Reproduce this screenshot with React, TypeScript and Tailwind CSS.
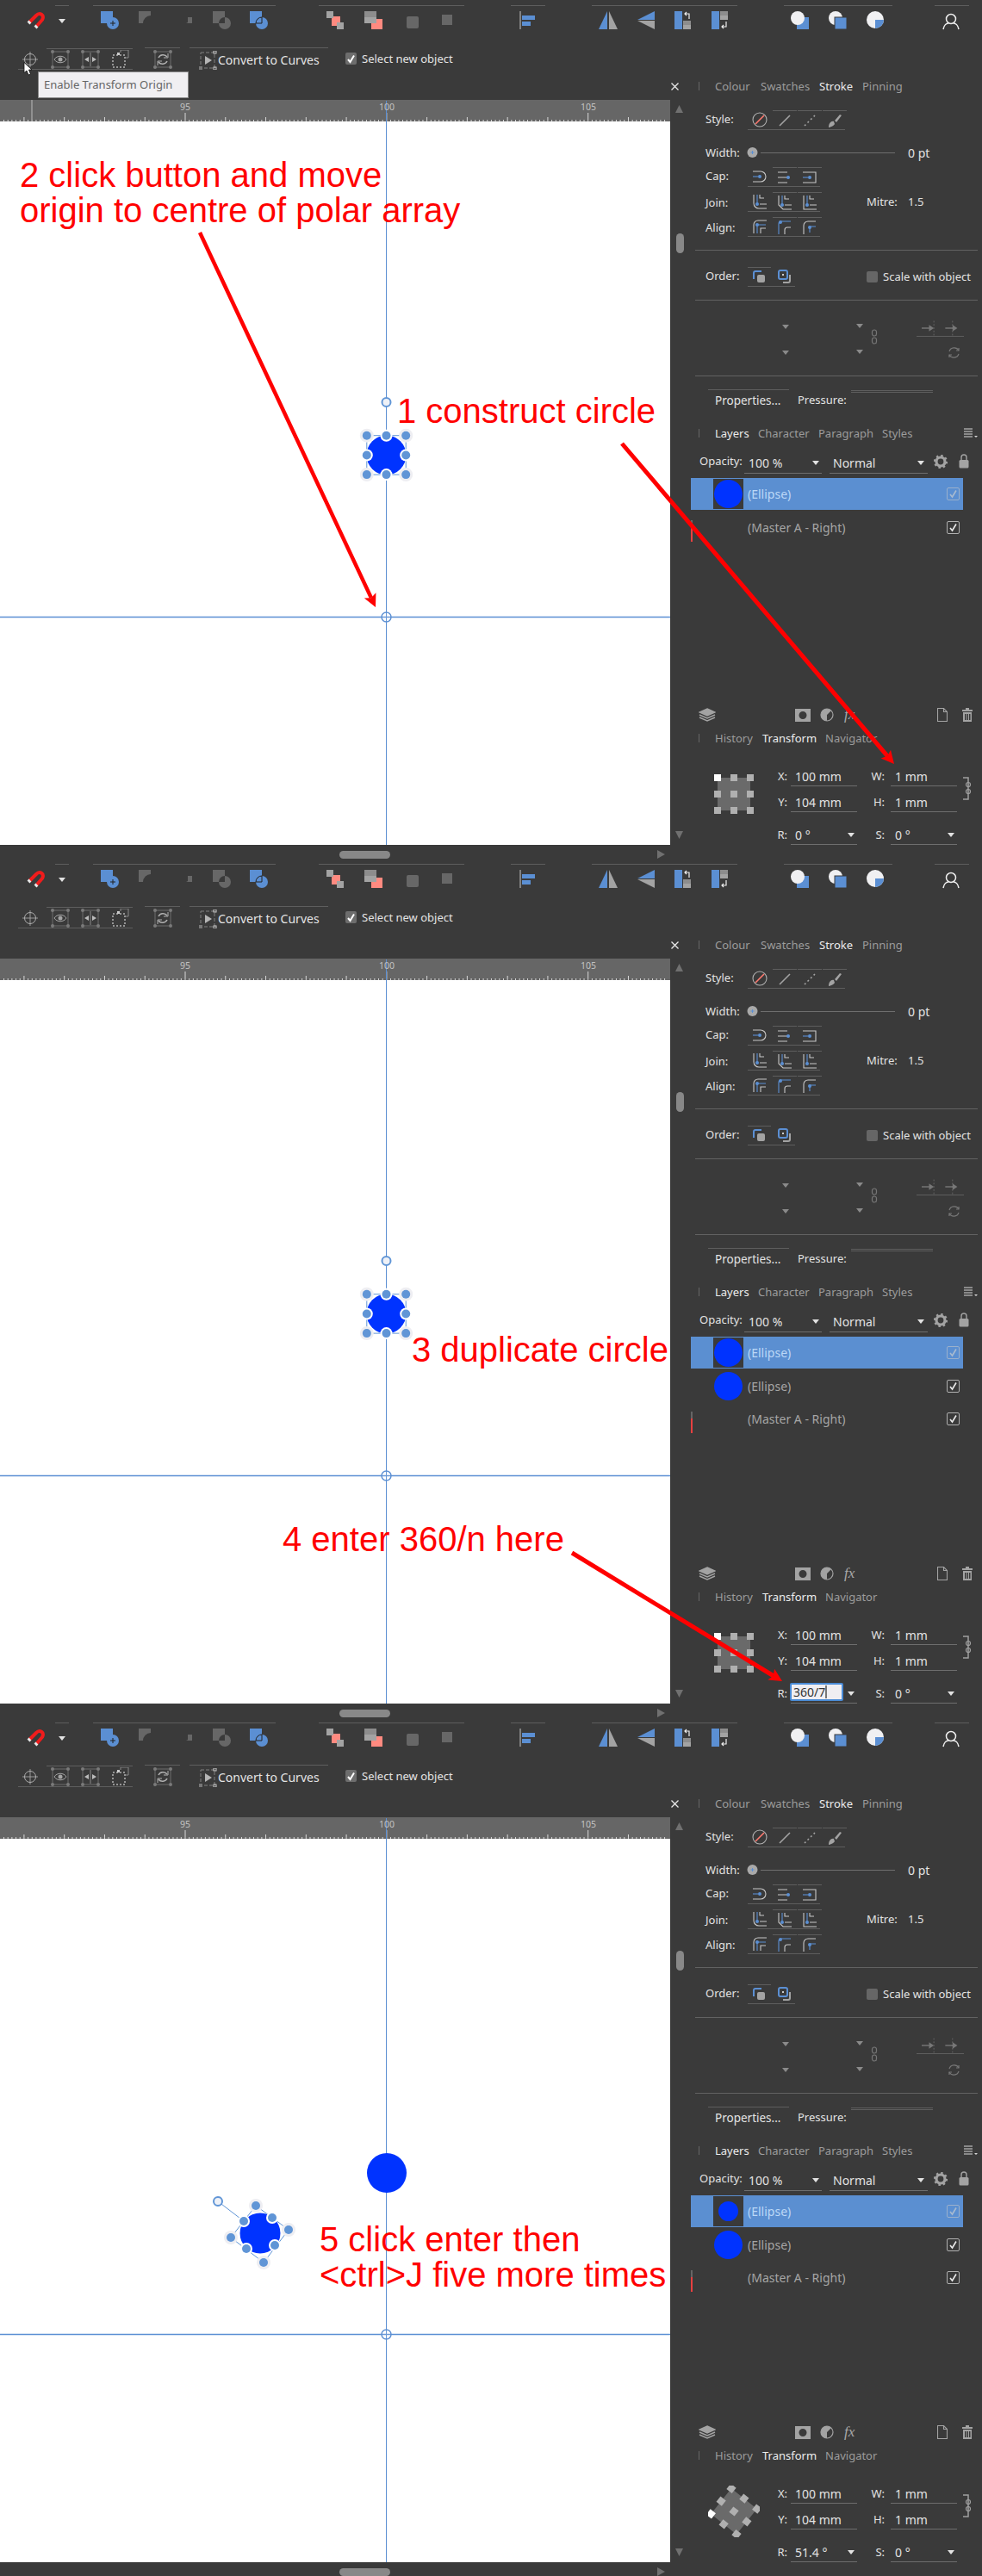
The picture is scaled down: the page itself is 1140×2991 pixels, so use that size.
import React from "react";

const BLUE = "#5b8fd3";
const GR = "#676767";
const LG = "#a3a3a3";
const SAL = "#ff8a80";

const Caret = () => (
  <svg className="w-[8px] h-[5px] shrink-0" viewBox="0 0 8 5"><path d="M0 0H8L4 5Z" fill="#e2e2e2" /></svg>
);
const GCaret = () => (
  <svg className="w-[8px] h-[5px] shrink-0" viewBox="0 0 8 5"><path d="M0 0H8L4 5Z" fill="#8a8a8a" /></svg>
);

const I22 = ({ children }: { children: React.ReactNode }) => (
  <svg className="w-[22px] h-[22px] shrink-0" viewBox="0 0 22 22">{children}</svg>
);

function Toolbar1() {
  return (
    <div className="flex h-[46px] items-start">
      <div className="ml-[31px] mt-[13px] w-[22px]">
        <I22>
          <path d="M3 13L11 5C15 1 21 4 18 10L11 18" fill="none" stroke="#f01c1c" strokeWidth="4" />
          <path d="M2 14L4 12M10 19L12 17" stroke="#e8e8e8" strokeWidth="4" />
        </I22>
      </div>
      <div className="ml-[11px] mt-[6px] w-[16px] h-[40px] border-t border-[#5e5e5e] flex justify-center pt-[15px]"><Caret /></div>
      <div className="ml-[28px] mt-[6px] w-[212px] h-[40px] border-t border-[#5e5e5e] flex pt-[6px] pl-[9px]">
        <I22>
          <rect x="0" y="0" width="14" height="14" fill={BLUE} />
          <circle cx="14" cy="14" r="7" fill={BLUE} stroke="#3a3a3a" strokeWidth="0" />
          <path d="M14 11V17M11 14H17" stroke="#222" strokeWidth="1" />
        </I22>
        <div className="ml-[22px]"><I22><path d="M0 0H14V5A9 9 0 0 0 5 14H0Z" fill={GR} /></I22></div>
        <div className="ml-[22px]"><I22><path d="M13 13V7L18 7V14H11Z" fill={GR} /></I22></div>
        <div className="ml-[20px]">
          <I22>
            <rect width="14" height="14" fill={GR} />
            <circle cx="14" cy="14" r="7" fill={GR} />
            <path d="M7 14A7 7 0 0 1 14 7V14Z" fill="#3a3a3a" />
          </I22>
        </div>
        <div className="ml-[21px]">
          <I22>
            <rect width="14" height="14" fill={BLUE} />
            <circle cx="14" cy="14" r="7" fill={BLUE} />
            <path d="M7 14A7 7 0 0 1 14 7V14Z" fill="none" stroke="#222" strokeWidth="1" />
          </I22>
        </div>
      </div>
      <div className="ml-[50px] mt-[6px] w-[169px] h-[40px] border-t border-[#5e5e5e] flex pt-[6px] pl-[9px]">
        <I22>
          <rect x="6" y="6" width="10" height="11" fill={SAL} />
          <rect x="0" y="0" width="8" height="8" fill={LG} />
          <rect x="12" y="13" width="8" height="8" fill={LG} />
        </I22>
        <div className="ml-[22px]">
          <I22>
            <rect x="8" y="9" width="13" height="12" fill={SAL} />
            <rect width="14" height="14" fill={LG} />
            <rect width="14" height="7" fill="#8d8d8d" />
          </I22>
        </div>
        <div className="ml-[27px]"><I22><rect x="0" y="6" width="14" height="14" rx="2" fill={GR} /></I22></div>
        <div className="ml-[19px]"><I22><rect x="0" y="4" width="12" height="12" fill={GR} /></I22></div>
      </div>
      <div className="ml-[54px] mt-[6px] w-[40px] h-[40px] border-t border-[#5e5e5e] pt-[6px] pl-[10px]">
        <I22>
          <rect x="0" y="0" width="2" height="21" fill="#808080" />
          <rect x="3" y="5" width="15" height="5" fill={BLUE} />
          <rect x="3" y="12" width="10" height="5" fill={BLUE} />
        </I22>
      </div>
      <div className="ml-[54px] mt-[6px] w-[169px] h-[40px] border-t border-[#5e5e5e] flex pt-[6px] pl-[8px]">
        <I22><path d="M10 0V21H0Z" fill={BLUE} /><path d="M12 0V21H22Z" fill={LG} /></I22>
        <div className="ml-[23px]"><I22><path d="M20 0V10H0Z" fill={BLUE} /><path d="M20 11V21L0 11Z" fill={LG} /></I22></div>
        <div className="ml-[21px]">
          <I22>
            <rect y="0" width="9" height="21" fill={BLUE} />
            <rect x="10" y="11" width="9" height="5" fill="#8d8d8d" />
            <rect x="10" y="16" width="9" height="5" fill={LG} />
            <path d="M17 9V3H12M14 1L12 3L14 5" fill="none" stroke="#eee" strokeWidth="1.2" />
          </I22>
        </div>
        <div className="ml-[21px]">
          <I22>
            <rect y="0" width="9" height="21" fill={BLUE} />
            <rect x="10" y="0" width="9" height="5" fill="#8d8d8d" />
            <rect x="10" y="5" width="9" height="5" fill={LG} />
            <path d="M17 12V18H12M14 16L12 18L14 20" fill="none" stroke="#eee" strokeWidth="1.2" />
          </I22>
        </div>
      </div>
      <div className="ml-[54px] mt-[6px] w-[126px] h-[40px] border-t border-[#5e5e5e] flex pt-[6px] pl-[8px]">
        <I22><rect x="7" y="7" width="14" height="14" fill={BLUE} /><circle cx="8" cy="8" r="8" fill="#f0f0f2" /></I22>
        <div className="ml-[22px]"><I22><circle cx="8" cy="8" r="8" fill="#f0f0f2" /><rect x="7" y="7" width="14" height="14" fill={BLUE} stroke="#3a3a3a" /></I22></div>
        <div className="ml-[22px]"><I22><circle cx="10" cy="10" r="10" fill="#f0f0f2" /><path d="M10 10H20A10 10 0 0 1 10 20Z" fill={BLUE} /></I22></div>
      </div>
      <div className="ml-[49px] mt-[6px] w-[40px] h-[40px] border-t border-[#5e5e5e] pt-[8px] pl-[9px]">
        <I22>
          <circle cx="10" cy="7" r="5.5" fill="none" stroke="#f0f0f0" strokeWidth="1.5" />
          <path d="M1 19C2 14 5 12 7 12M19 19C18 14 15 12 13 12" fill="none" stroke="#f0f0f0" strokeWidth="1.5" />
        </I22>
      </div>
    </div>
  );
}

const HBox = ({ children }: { children: React.ReactNode }) => (
  <svg className="w-[22px] h-[22px] shrink-0" viewBox="0 0 22 22">
    <rect x="2" y="2" width="18" height="18" fill="none" stroke="#6c6c6c" strokeWidth="1" />
    {[[2, 2], [20, 2], [2, 20], [20, 20]].map(([x, y], i) => <circle key={i} cx={x} cy={y} r="2" fill="#7a7a7a" />)}
    {children}
  </svg>
);

function Toolbar2() {
  return (
    <div className="flex h-[70px] items-start">
      <div className="ml-[21px] mt-[10px] w-[133px] h-[25px] border-b border-[#5e5e5e] flex">
        <svg className="ml-[5px] mt-[4px] w-[18px] h-[18px] shrink-0" viewBox="0 0 18 18">
          <circle cx="9" cy="9" r="6.5" fill="none" stroke="#b0b0b0" />
          <path d="M9 0V18M0 9H18" stroke="#b0b0b0" strokeWidth="0.8" />
        </svg>
        <div className="ml-[10px] w-[100px] border-t border-[#5e5e5e] flex pl-[5px] pt-[1px]">
          <HBox>
            <path d="M4 11C7 6 15 6 18 11C15 16 7 16 4 11Z" fill="none" stroke="#a5a5a5" />
            <circle cx="11" cy="11" r="2.5" fill="#a5a5a5" />
          </HBox>
          <div className="ml-[13px]">
            <HBox><path d="M11 3V19" stroke="#8a8a8a" /><path d="M4 11L9 8V14ZM18 11L13 8V14Z" fill="#bbb" /></HBox>
          </div>
          <div className="ml-[13px]">
            <svg className="w-[22px] h-[22px]" viewBox="0 0 22 22">
              <rect x="2" y="6" width="14" height="14" fill="none" stroke="#eee" strokeDasharray="2 2" />
              <path d="M11 3V0H20V9H17" fill="none" stroke="#8a8a8a" />
              <rect x="7" y="3" width="3" height="3" fill="#ccc" />
            </svg>
          </div>
        </div>
      </div>
      <div className="ml-[14px] mt-[9px] w-[41px] h-[26px] border-t border-[#5e5e5e] pl-[10px] pt-[2px]">
        <HBox><path d="M6 9A6 6 0 0 1 16 8M16 13A6 6 0 0 1 6 14" fill="none" stroke="#b0b0b0" strokeWidth="1.6" /><path d="M17 4V9H12M5 18V13H10" fill="none" stroke="#b0b0b0" /></HBox>
      </div>
      <div className="ml-[11px] mt-[9px] w-[161px] h-[26px] border-t border-[#5e5e5e] pl-[11px] pt-[2px] flex items-center">
        <svg className="w-[21px] h-[22px] shrink-0" viewBox="0 0 21 22">
          <path d="M2 2H18V20H2Z" fill="none" stroke="#808080" strokeDasharray="4 2" />
          <path d="M7 6L15 11L7 16Z" fill="#b5b5b5" />
          <rect x="0" y="18" width="4" height="4" fill="#777" />
          <rect x="17" y="0" width="3" height="3" fill="none" stroke="#ccc" />
          <rect x="17" y="19" width="3" height="3" fill="none" stroke="#ccc" />
        </svg>
        <span className="ml-[1px] text-[14px] leading-[16px] text-[#e4e4e4] whitespace-nowrap">Convert to Curves</span>
      </div>
      <div className="ml-[20px] mt-[15px] w-[13px] h-[14px] bg-[#6d6d6d] rounded-[2px] flex items-center justify-center">
        <svg className="w-[11px] h-[11px]" viewBox="0 0 11 11"><path d="M2 6L4.5 9L9 1.5" fill="none" stroke="#fff" strokeWidth="2" /></svg>
      </div>
      <span className="ml-[6px] mt-[14px] text-[13px] leading-[16px] text-[#e4e4e4] whitespace-nowrap">Select new object</span>
    </div>
  );
}

function Ruler({ first }: { first: boolean }) {
  const ticks: React.ReactNode[] = [];
  for (let i = -46; i < 120; i++) {
    const x = 215 + i * 4.677;
    if (x < 0 || x > 778) continue;
    const major = i % 50 === 0;
    const mid = i % 10 === 0;
    const h = major ? 10 : mid ? 5 : 2;
    ticks.push(<line key={i} x1={x} x2={x} y1={25 - h} y2={25} stroke="#d8d8d8" strokeWidth="1" />);
  }
  return (
    <div className="h-[25px] bg-[#666666]">
      <svg className="block w-full h-full" viewBox="0 0 778 25">
        {ticks}
        {first && <line x1="37" x2="37" y1="0" y2="25" stroke="#a0a0a0" strokeWidth="1.5" />}
        <line x1="448.5" x2="448.5" y1="1" y2="25" stroke={BLUE} strokeWidth="1" />
        {[[215, "95"], [449, "100"], [683, "105"]].map(([x, t]) => (
          <text key={t as string} x={x as number} y="12" textAnchor="middle" fontSize="10.5" fill="#c2c2c2" fontFamily="Noto Sans, sans-serif">{t}</text>
        ))}
      </svg>
    </div>
  );
}

const Handle = ({ x, y, ring }: { x: number; y: number; ring?: boolean }) => (
  <g>
    <circle cx={x} cy={y} r={ring ? 7 : 8} fill={ring ? "#ffffff" : "#eeeef2"} />
    <circle cx={x} cy={y} r="5" fill="#6095d6" />
  </g>
);

function CanvasDrawing({ rotated }: { rotated: boolean }) {
  return (
    <svg className="absolute inset-0 w-full h-full" viewBox="0 0 778 840">
      <line x1="448.5" x2="448.5" y1="0" y2="840" stroke={BLUE} strokeWidth="1" />
      <line x1="0" x2="778" y1="575.5" y2="575.5" stroke={BLUE} strokeWidth="1.4" />
      <circle cx="448.5" cy="575.5" r="5.5" fill="#fff" fillOpacity="0.1" stroke={BLUE} strokeWidth="1.4" />
      {!rotated && (
        <g>
          <circle cx="448.5" cy="326" r="5" fill="#eef1f7" stroke="#6095d6" strokeWidth="2" />
          <circle cx="448.5" cy="387.5" r="23" fill="#0033ff" />
          <rect x="425.8" y="364.7" width="45.4" height="45.4" fill="none" stroke="#6095d6" />
          {[[425.8, 364.7], [471.2, 364.7], [425.8, 410.1], [471.2, 410.1]].map(([x, y], i) => <Handle key={i} x={x} y={y} />)}
          {[[448.5, 364.7], [425.8, 387.5], [471.2, 387.5], [448.5, 410.1]].map(([x, y], i) => <Handle key={i} x={x} y={y} ring />)}
        </g>
      )}
      {rotated && (
        <g>
          <circle cx="449" cy="388" r="23" fill="#0033ff" />
          <line x1="253" y1="421" x2="283" y2="444" stroke="#6095d6" />
          <circle cx="253" cy="421" r="5" fill="#eef1f7" stroke="#6095d6" strokeWidth="2" />
          <circle cx="302" cy="458" r="23.5" fill="#0033ff" />
          <path d="M297 426L335 454L306 492L268 463Z" fill="none" stroke="#6095d6" />
          {[[297, 426], [335, 454], [306, 492], [268, 463]].map(([x, y], i) => <Handle key={i} x={x} y={y} />)}
          {[[283, 444], [316, 440], [319, 472], [286, 476]].map(([x, y], i) => <Handle key={i} x={x} y={y} ring />)}
        </g>
      )}
    </svg>
  );
}

function Arrow({ x1, y1, x2, y2, w = 4.5 }: { x1: number; y1: number; x2: number; y2: number; w?: number }) {
  const dx = x2 - x1;
  const dy = y2 - y1;
  const l = Math.hypot(dx, dy);
  const ux = dx / l;
  const uy = dy / l;
  const L = 15;
  const W = 7.5;
  const bx = x2 - ux * L;
  const by = y2 - uy * L;
  const nx = x2 - ux * (L - 3);
  const ny = y2 - uy * (L - 3);
  const pts = `${x2},${y2} ${bx - uy * W},${by + ux * W} ${nx},${ny} ${bx + uy * W},${by - ux * W}`;
  return (
    <g>
      <line x1={x1} y1={y1} x2={nx} y2={ny} stroke="#ff0000" strokeWidth={w} />
      <polygon points={pts} fill="#ff0000" />
    </g>
  );
}

const Cell = ({ top, children }: { top?: boolean; children: React.ReactNode }) => (
  <div className={`w-[28px] h-[22px] flex items-center justify-center shrink-0 ${top ? "border-t border-[#5e5e5e] ml-px" : ""}`}>{children}</div>
);

const S16 = ({ children }: { children: React.ReactNode }) => (
  <svg className="w-[18px] h-[18px] shrink-0" viewBox="0 0 18 18" fill="none" stroke="#c8c8c8" strokeWidth="1.1">{children}</svg>
);
const Dot = ({ x, y }: { x: number; y: number }) => <circle cx={x} cy={y} r="2" fill={BLUE} stroke="none" />;

function StrokePanel() {
  const label = "ml-[20px] w-[49px] text-[13px] leading-[20px] text-[#e2e2e2] shrink-0";
  return (
    <div>
      <div className="mt-[18px] flex items-center">
        <span className={`${label} -mt-[4px]`}>Style:</span>
        <div className="flex w-[113px] h-[23px] border-b border-[#5e5e5e]">
          <Cell>
            <S16>
              <circle cx="9" cy="9" r="8" stroke="#b0b0b0" />
              <path d="M4 14L14 4" stroke="#ff7a70" strokeWidth="1.6" />
            </S16>
          </Cell>
          <Cell top><S16><path d="M3 15L15 3" stroke={LG} strokeWidth="1.6" /></S16></Cell>
          <Cell top><S16><path d="M3 15L15 3" stroke={LG} strokeWidth="1.6" strokeDasharray="2 3" /></S16></Cell>
          <Cell top><S16><path d="M2 17C2 12 5 9 8 10L9 13C7 16 5 16 2 17ZM9 9L15 2L17 3L11 11Z" fill={LG} stroke="none" /></S16></Cell>
        </div>
      </div>
      <div className="mt-[16px] h-[20px] flex items-center">
        <span className={label}>Width:</span>
        <svg className="w-[16px] h-[14px] -ml-[2px] shrink-0" viewBox="0 0 14 14">
          <circle cx="6.5" cy="7" r="6" fill="#a9a9a9" />
          <path d="M6.5 5V9M4.5 7H8.5" stroke={BLUE} />
        </svg>
        <div className="ml-[1px] w-[156px] h-px bg-[#6e6e6e]" />
        <span className="ml-[15px] text-[14px] text-[#e2e2e2] whitespace-nowrap">0 pt</span>
      </div>
      <div className="mt-[7px] flex items-center">
        <span className={`${label} -mt-[4px]`}>Cap:</span>
        <div className="flex w-[84px] h-[23px] border-b border-[#5e5e5e]">
          <Cell><S16><path d="M1 3H10A6 6 0 0 1 10 15H1" /><path d="M1 9H7" stroke={BLUE} /><Dot x={9} y={9} /></S16></Cell>
          <Cell top><S16><path d="M1 3H12M1 15H12M1 9H12" /><Dot x={13} y={9} /></S16></Cell>
          <Cell top><S16><path d="M1 3H16V15H1" /><path d="M1 9H7" stroke={BLUE} /><Dot x={9} y={9} /></S16></Cell>
        </div>
      </div>
      <div className="mt-[6px] flex items-center">
        <span className={label}>Join:</span>
        <div className="flex w-[84px] h-[23px] border-b border-[#5e5e5e]">
          <Cell><S16><path d="M2 1V11A6 6 0 0 0 8 17H17M9 1V5H14M9 12H17" /><Dot x={6} y={12} /><path d="M6 1V12" stroke={BLUE} /></S16></Cell>
          <Cell top><S16><path d="M2 1V12L7 17H17M9 1V5H14M9 12H17" /><Dot x={6} y={12} /><path d="M6 1V12" stroke={BLUE} /></S16></Cell>
          <Cell top><S16><path d="M2 1V17H17M9 1V5H14M9 12H17" /><Dot x={6} y={12} /><path d="M6 1V12" stroke={BLUE} /></S16></Cell>
        </div>
        <span className="ml-[54px] w-[48px] text-[13px] text-[#e2e2e2]">Mitre:</span>
        <span className="text-[13px] text-[#e2e2e2]">1.5</span>
      </div>
      <div className="mt-[6px] flex items-center">
        <span className={label}>Align:</span>
        <div className="flex w-[84px] h-[23px] border-b border-[#5e5e5e]">
          <Cell><S16><path d="M2 17V7A5 5 0 0 1 7 2H17M10 17V11H16" /><path d="M6 17V7H16" stroke={BLUE} /><Dot x={6} y={7} /></S16></Cell>
          <Cell top><S16><path d="M9 17V12A3 3 0 0 1 12 9H16" /><path d="M2 17V5A3 3 0 0 1 5 2H16" stroke={BLUE} /><Dot x={4} y={3} /></S16></Cell>
          <Cell top><S16><path d="M2 17V7A5 5 0 0 1 7 2H16" /><path d="M9 15V8H16" stroke={BLUE} /><Dot x={9} y={9} /></S16></Cell>
        </div>
      </div>
      <div className="mt-[15px] ml-[8px] w-[328px] h-px bg-[#626262]" />
      <div className="mt-[19px] flex items-center">
        <span className={`${label} -mt-[4px]`}>Order:</span>
        <div className="flex w-[55px] h-[23px] border-b border-[#5e5e5e]">
          <div className="w-[27px] h-[22px] border-t border-[#5e5e5e] pl-[6px] pt-[3px]">
            <svg className="w-[16px] h-[16px]" viewBox="0 0 16 16"><path d="M10 1H3A2 2 0 0 0 1 3V10" fill="none" stroke={BLUE} strokeWidth="2" /><rect x="5" y="5" width="9" height="9" rx="2" fill={LG} /></svg>
          </div>
          <div className="ml-[8px] mt-[3px]">
            <svg className="w-[16px] h-[16px]" viewBox="0 0 16 16"><rect x="1" y="1" width="10" height="10" rx="2" fill="none" stroke={BLUE} strokeWidth="2" /><path d="M14 6V13A2 2 0 0 1 12 15H6" fill="none" stroke={LG} strokeWidth="2" /><rect x="5" y="5" width="2" height="2" fill="#ccc" /></svg>
          </div>
        </div>
        <div className="ml-[83px] w-[13px] h-[13px] rounded-[2px] bg-[#666666]" />
        <span className="ml-[6px] text-[13px] text-[#e2e2e2] whitespace-nowrap">Scale with object</span>
      </div>
      <div className="mt-[15px] ml-[8px] w-[328px] h-px bg-[#626262]" />
      <div className="h-[87px] flex items-start">
        <div className="ml-[109px] mt-[28px] flex flex-col gap-[25px]"><GCaret /><GCaret /></div>
        <div className="ml-[78px] mt-[27px] flex flex-col gap-[25px]"><GCaret /><GCaret /></div>
        <svg className="ml-[9px] mt-[33px] w-[8px] h-[18px]" viewBox="0 0 8 18" fill="none" stroke="#767676" strokeWidth="1.2"><rect x="1.5" y="1" width="5" height="7" rx="2.5" /><rect x="1.5" y="10" width="5" height="7" rx="2.5" /></svg>
        <div className="ml-[45px] mt-[22px] w-[55px]">
          <div className="h-[20px] border-b border-[#5e5e5e] flex items-center pl-[6px]">
            <svg className="w-[52px] h-[18px]" viewBox="0 0 52 18"><path d="M0 9H10" stroke="#777" strokeWidth="1.5" /><path d="M9 5L15 9L9 13Z" fill="#777" /><path d="M15 0V18M38 0V18" stroke="#666" strokeDasharray="2 2" /><path d="M29 9H39" stroke="#777" strokeWidth="1.5" /><path d="M38 5L44 9L38 13Z" fill="#777" /></svg>
          </div>
          <svg className="ml-[36px] mt-[11px] w-[15px] h-[15px]" viewBox="0 0 15 15" fill="none" stroke="#777" strokeWidth="1.2"><path d="M2 6A6 6 0 0 1 13 5M13 9A6 6 0 0 1 2 10" /><path d="M13 2V5H10M2 13V10H5" /></svg>
        </div>
      </div>
      <div className="ml-[8px] w-[328px] h-px bg-[#626262]" />
      <div className="mt-[15px] flex items-start">
        <div className="ml-[23px] w-[94px] h-[24px] border-t border-[#5e5e5e] pl-[8px] text-[13.5px] leading-[24px] text-[#e2e2e2] whitespace-nowrap">Properties...</div>
        <span className="ml-[10px] w-[62px] text-[13px] leading-[24px] text-[#e2e2e2] whitespace-nowrap">Pressure:</span>
        <div className="w-[95px] h-[3px] mt-[1px] border-y border-[#5e5e5e]" />
      </div>
    </div>
  );
}

const TabSep = () => <div className="ml-[12px] w-px h-[10px] bg-[#666666] shrink-0" />;

function Layers({ strip }: { strip: number }) {
  const rows: { name: string; sel?: boolean; circle?: number; mark?: boolean }[] =
    strip === 1
      ? [{ name: "(Ellipse)", sel: true, circle: 33 }, { name: "(Master A - Right)", mark: true }]
      : [
          { name: "(Ellipse)", sel: true, circle: strip === 3 ? 23 : 33 },
          { name: "(Ellipse)", circle: 33 },
          { name: "(Master A - Right)", mark: true },
        ];
  return (
    <div className="h-[263px]">
      {rows.map((r, i) => (
        <div key={i} className={`ml-[3px] w-[316px] flex items-center ${r.sel ? "h-[37px] mb-px bg-[#5b8fd1]" : "h-[38px]"}`}>
          <div className="w-[3px] h-[25px] mt-[8px] shrink-0">
            {r.mark && (<div className="w-[2px] h-full flex flex-col"><div className="h-[8px] bg-[#666666]" /><div className="flex-1 bg-[#e64040]" /></div>)}
          </div>
          <div className={`ml-[23px] w-[35px] h-[35px] flex items-center justify-center shrink-0 ${r.sel ? "bg-[#3a3a3a]" : ""}`}>
            {r.circle === 33 && <div className="w-[33px] h-[33px] rounded-full bg-[#0033ff]" />}
            {r.circle === 23 && <div className="w-[23px] h-[23px] rounded-full bg-[#0033ff]" />}
          </div>
          <span className={`ml-[5px] flex-1 text-[14px] whitespace-nowrap ${r.sel ? "text-[#bcd8f7]" : "text-[#a6a6a6]"}`}>{r.name}</span>
          <div className={`mr-[4px] w-[15px] h-[15px] border rounded-[2px] flex items-center justify-center ${r.sel ? "border-[#9ab0cc]" : "border-[#b0b0b0]"}`}>
            <svg className="w-[11px] h-[11px]" viewBox="0 0 11 11"><path d="M2 6L4.5 9L9 1.5" fill="none" stroke={r.sel ? "#a8bad0" : "#e8e8e8"} strokeWidth="1.6" /></svg>
          </div>
        </div>
      ))}
    </div>
  );
}

function Transform({ strip }: { strip: number }) {
  const labelC = "w-[32px] text-right text-[13px] text-[#e2e2e2] shrink-0";
  const field = "ml-[4px] w-[77px] h-[22px] border-b border-[#6e6e6e] pl-[5px] text-[14px] leading-[21px] text-[#e2e2e2] whitespace-nowrap";
  const field2 = "ml-[7px] w-[77px] h-[22px] border-b border-[#6e6e6e] pl-[5px] text-[14px] leading-[21px] text-[#e2e2e2] whitespace-nowrap";
  const pts: [number, number][] = [];
  for (const y of [-19, 0, 19]) for (const x of [-19, 0, 19]) pts.push([x, y]);
  return (
    <div className="flex mt-[24px] items-start">
      <svg className="ml-[23px] mt-[1px] w-[60px] h-[60px] shrink-0" viewBox="-30 -30 60 60">
        <g transform={strip === 3 ? "rotate(-51.4)" : undefined}>
          <rect x="-19" y="-19" width="38" height="38" fill="#6a6a6a" />
          {pts.map(([x, y], i) => <rect key={i} x={x - 4} y={y - 4} width="8" height="8" fill={i === 0 ? "#ffffff" : "#b0b0b0"} />)}
        </g>
      </svg>
      <div>
        <div className="flex items-start">
          <div>
            <div className="flex items-center"><span className={labelC}>X:</span><div className={field}>100 mm</div><span className={labelC}>W:</span><div className={field2}>1 mm</div></div>
            <div className="flex items-center mt-[8px]"><span className={labelC}>Y:</span><div className={field}>104 mm</div><span className={labelC}>H:</span><div className={field2}>1 mm</div></div>
          </div>
          <svg className="ml-[7px] mt-[11px] w-[10px] h-[27px]" viewBox="0 0 10 27" fill="none" stroke="#a0a0a0" strokeWidth="1.2">
            <path d="M0 1H6V26H0" strokeWidth="1.5" />
            <circle cx="6" cy="9" r="2.5" /><circle cx="6" cy="17" r="2.5" />
          </svg>
        </div>
        <div className="flex items-center mt-[16px]">
          <span className={labelC}>R:</span>
          <div className={`${field} flex items-center justify-between pr-[3px] ${strip === 2 ? "!pl-0" : ""}`}>
            {strip === 2 ? (
              <div className="-ml-[1px] -mt-[4px] w-[62px] h-[21px] bg-[#efeef2] border-2 border-[#4a8bd6] rounded-[2px] flex items-center pl-[2px] text-[#333333] text-[14px]">
                <span className="border-r-2 border-[#777777] leading-[15px]">360/7</span>
              </div>
            ) : (
              <span>{strip === 3 ? "51.4 °" : "0 °"}</span>
            )}
            <Caret />
          </div>
          <span className={labelC}>S:</span>
          <div className={`${field2} flex items-center justify-between pr-[3px]`}><span>0 °</span><Caret /></div>
        </div>
      </div>
    </div>
  );
}

function RightPanel({ strip }: { strip: number }) {
  const off = "text-[13px] leading-[20px] text-[#9c9c9c] whitespace-nowrap";
  const on = "text-[13px] leading-[20px] text-[#ececec] whitespace-nowrap";
  return (
    <div className="w-[362px] h-[951px] flex">
      <div className="w-[21px] h-full flex flex-col shrink-0">
        <svg className="ml-[1px] mt-[50px] w-[9px] h-[9px]" viewBox="0 0 9 9"><path d="M0.5 0.5L8.5 8.5M8.5 0.5L0.5 8.5" stroke="#e8e8e8" strokeWidth="1.3" /></svg>
        <svg className="ml-[6px] mt-[17px] w-[9px] h-[9px]" viewBox="0 0 9 9"><path d="M4.5 0L9 9H0Z" fill="#707070" /></svg>
        <div className="ml-[7px] mt-[140px] w-[9px] h-[23px] rounded-full bg-[#888888]" />
        <svg className="ml-[6px] mt-[671px] w-[9px] h-[9px]" viewBox="0 0 9 9"><path d="M0 0H9L4.5 9Z" fill="#707070" /></svg>
      </div>
      <div className="w-[341px]">
        <div className="mt-[44px] h-[20px] flex items-center">
          <TabSep />
          <span className={`ml-[18px] w-[53px] ${off}`}>Colour</span>
          <span className={`w-[68px] ${off}`}>Swatches</span>
          <span className={`w-[50px] ${on}`}>Stroke</span>
          <span className={off}>Pinning</span>
        </div>
        <StrokePanel />
        <div className="mt-[17px] h-[20px] flex items-center">
          <TabSep />
          <span className={`ml-[18px] w-[50px] ${on}`}>Layers</span>
          <span className={`w-[70px] ${off}`}>Character</span>
          <span className={`w-[74px] ${off}`}>Paragraph</span>
          <span className={off}>Styles</span>
          <svg className="ml-auto mr-[5px] w-[16px] h-[12px]" viewBox="0 0 16 12"><path d="M0 1H10M0 4H10M0 7H10M0 10H10" stroke="#d8d8d8" strokeWidth="1.2" /><path d="M12 9H16L14 11Z" fill="#d8d8d8" /></svg>
        </div>
        <div className="mt-[12px] h-[25px] flex items-center">
          <span className="ml-[13px] w-[52px] text-[13px] text-[#e2e2e2] -mt-[4px] whitespace-nowrap">Opacity:</span>
          <div className="w-[90px] h-[25px] border-b border-[#6e6e6e] pl-[5px] pr-[3px] flex items-center justify-between text-[14px] text-[#e2e2e2]"><span>100 %</span><Caret /></div>
          <div className="ml-[9px] w-[114px] h-[25px] border-b border-[#6e6e6e] pl-[4px] pr-[4px] flex items-center justify-between text-[14px] text-[#e2e2e2]"><span>Normal</span><Caret /></div>
          <svg className="ml-[7px] w-[16px] h-[16px] -mt-[4px] shrink-0" viewBox="0 0 16 16"><circle cx="8" cy="8" r="5" fill="none" stroke={LG} strokeWidth="3.2" /><circle cx="8" cy="8" r="7" fill="none" stroke={LG} strokeWidth="2.2" strokeDasharray="2.5 3" /></svg>
          <svg className="ml-[13px] w-[12px] h-[17px] -mt-[4px] shrink-0" viewBox="0 0 12 17"><path d="M3 7V4A3 3 0 0 1 9 4V7" fill="none" stroke={LG} strokeWidth="1.4" /><rect x="0.5" y="7" width="11" height="9.5" rx="1.5" fill={LG} /></svg>
        </div>
        <div className="h-[5px]" />
        <Layers strip={strip} />
        <div className="mt-[2px] h-[20px] flex items-center">
          <svg className="ml-[12px] w-[20px] h-[16px] shrink-0" viewBox="0 0 20 16" fill="none" stroke={LG} strokeWidth="1.4"><path d="M10 1L19 5L10 9L1 5Z" fill={LG} /><path d="M1 8L10 12L19 8M1 11L10 15L19 11" /></svg>
          <svg className="ml-[92px] w-[18px] h-[15px] shrink-0" viewBox="0 0 18 15"><path fillRule="evenodd" d="M0 0H18V15H0ZM9 3A4.5 4.5 0 1 0 9 12A4.5 4.5 0 1 0 9 3Z" fill={LG} /></svg>
          <svg className="ml-[11px] w-[16px] h-[16px] shrink-0" viewBox="0 0 16 16"><circle cx="8" cy="8" r="7" fill="none" stroke={LG} strokeWidth="1.2" /><path d="M8 1A7 7 0 0 0 8 15Z M3 13L13 3A7 7 0 0 0 3 13Z" fill={LG} /></svg>
          <span className="ml-[12px] w-[20px] font-['Liberation_Serif',serif] italic text-[17px] leading-[16px] text-[#a8a8a8]">fx</span>
          <svg className="ml-[88px] w-[12px] h-[16px] shrink-0" viewBox="0 0 12 16" fill="none" stroke={LG} strokeWidth="1.1"><path d="M0.5 0.5H7.5L11.5 4.5V15.5H0.5Z" /><path d="M7.5 0.5V4.5H11.5" /></svg>
          <svg className="ml-[17px] w-[12px] h-[16px] shrink-0" viewBox="0 0 12 16" fill={LG}><rect x="4" y="0" width="4" height="2" /><rect x="0" y="2" width="12" height="2" /><path fillRule="evenodd" d="M1 5H11V16H1ZM3 7V14H4.5V7ZM5.5 7V14H7V7ZM8 7V14H9.5V7Z" /></svg>
        </div>
        <div className="mt-[7px] h-[20px] flex items-center">
          <TabSep />
          <span className={`ml-[18px] w-[55px] ${off}`}>History</span>
          <span className={`w-[73px] ${on}`}>Transform</span>
          <span className={off}>Navigator</span>
        </div>
        <Transform strip={strip} />
      </div>
    </div>
  );
}

function Strip({ strip }: { strip: number }) {
  const first = strip === 1;
  const text = "absolute font-['Liberation_Sans',Arial,sans-serif] text-[#ff0000] text-[40px] leading-[41px] whitespace-nowrap";
  return (
    <div className="relative h-[997px] overflow-hidden bg-[#3a3a3a]">
      <Toolbar1 />
      <div className="flex">
        <div className="w-[778px] shrink-0">
          <Toolbar2 />
          <Ruler first={first} />
          <div className="relative h-[840px] bg-white">
            <CanvasDrawing rotated={strip === 3} />
          </div>
          <div className="h-[16px] flex items-start">
            <div className="ml-[394px] mt-[7px] w-[59px] h-[9px] rounded-full bg-[#888888]" />
            <svg className="ml-[310px] mt-[6px] w-[9px] h-[10px]" viewBox="0 0 9 10"><path d="M0 0L9 5L0 10Z" fill="#707070" /></svg>
          </div>
        </div>
        <RightPanel strip={strip} />
      </div>

      <svg className="absolute inset-0 w-full h-full pointer-events-none" viewBox="0 0 1140 997">
        {strip === 1 && <Arrow x1={232} y1={270} x2={436} y2={705} />}
        {strip === 1 && <Arrow x1={722} y1={515} x2={1038} y2={887} w={5} />}
        {strip === 2 && <Arrow x1={664} y1={806} x2={908} y2={955} w={5} />}
      </svg>

      {strip === 1 && (
        <>
          <div className={`${text} left-[23px] top-[183px]`}>2 click button and move<br />origin to centre of polar array</div>
          <div className={`${text} left-[461px] top-[457px]`}>1 construct circle</div>
          <div className="absolute left-[44px] top-[83px] w-[175px] h-[31px] bg-[#f0eff2] border border-[#8a8a8a] flex items-center pl-[6px] text-[13px] text-[#666666] whitespace-nowrap">Enable Transform Origin</div>
          <svg className="absolute left-[27px] top-[72px] w-[11px] h-[16px]" viewBox="0 0 11 16"><path d="M1 0.5L1 12.5L4 10L6 15L8.5 14L6.5 9L10 9Z" fill="#fff" stroke="#111" strokeWidth="0.8" /></svg>
        </>
      )}
      {strip === 2 && (
        <>
          <div className={`${text} left-[478px] top-[550px]`}>3 duplicate circle</div>
          <div className={`${text} left-[328px] top-[770px]`}>4 enter 360/n here</div>
        </>
      )}
      {strip === 3 && (
        <div className={`${text} left-[371px] top-[586px]`}>5 click enter then<br />{"<ctrl>J five more times"}</div>
      )}
    </div>
  );
}

export default function App() {
  return (
    <div className="w-[1140px] font-['Noto_Sans',sans-serif]">
      <Strip strip={1} />
      <Strip strip={2} />
      <Strip strip={3} />
    </div>
  );
}
